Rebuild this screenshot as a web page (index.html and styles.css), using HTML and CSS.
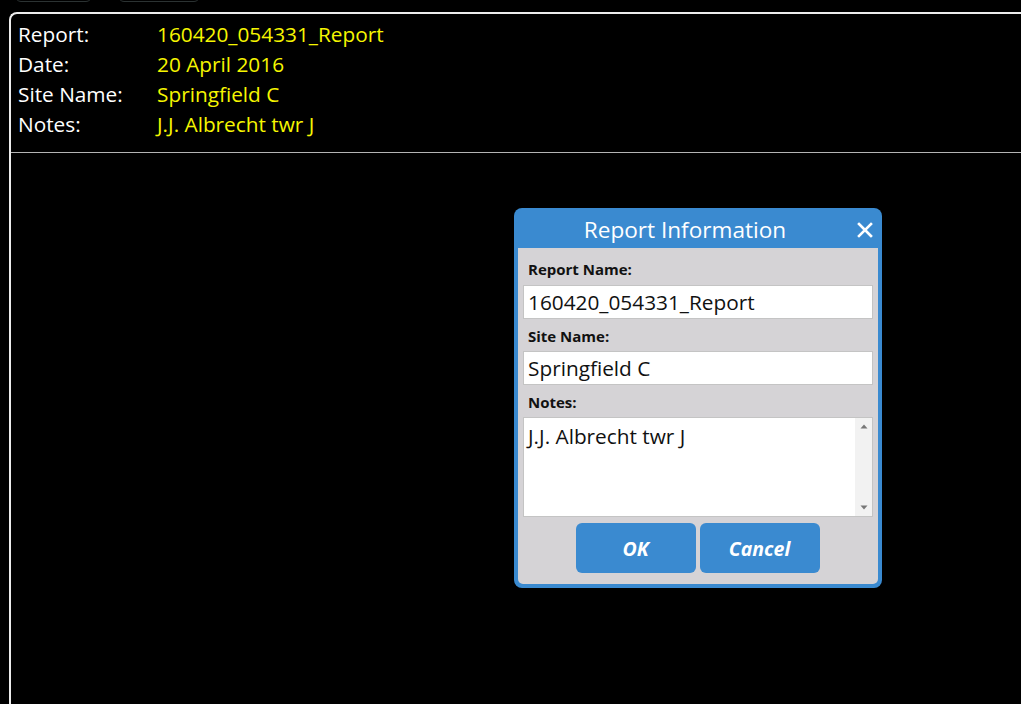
FILE: index.html
```html
<!DOCTYPE html>
<html>
<head>
<meta charset="utf-8">
<link rel="stylesheet" href="styles.css">
</head>
<body>
<div class="tabs">
  <div class="tab tab-a"></div>
  <div class="tab tab-b"></div>
</div>
<div class="panel">
  <div class="info">
    <div class="lbl">Report:</div><div class="val">160420_054331_Report</div>
    <div class="lbl">Date:</div><div class="val">20 April 2016</div>
    <div class="lbl">Site Name:</div><div class="val">Springfield C</div>
    <div class="lbl">Notes:</div><div class="val">J.J. Albrecht twr J</div>
  </div>
  <div class="content"></div>
</div>

<div class="dialog">
  <div class="dlg-title">
    <span>Report Information</span>
    <svg class="close" width="16" height="16" viewBox="0 0 16 16"><path d="M2 2 L14 14 M14 2 L2 14" stroke="#fff" stroke-width="2.6" stroke-linecap="square"/></svg>
  </div>
  <div class="dlg-body">
    <div class="f-lbl first">Report Name:</div>
    <div class="field">160420_054331_Report</div>
    <div class="f-lbl">Site Name:</div>
    <div class="field">Springfield C</div>
    <div class="f-lbl">Notes:</div>
    <div class="area">
      <div class="area-text">J.J. Albrecht twr J</div>
      <div class="scroll">
        <svg width="8" height="5" viewBox="0 0 8 5"><path d="M4 0.5 L7.5 4.5 L0.5 4.5 Z" fill="#777"/></svg>
        <svg width="8" height="5" viewBox="0 0 8 5"><path d="M0.5 0.5 L7.5 0.5 L4 4.5 Z" fill="#777"/></svg>
      </div>
    </div>
    <div class="buttons">
      <div class="btn">OK</div>
      <div class="btn">Cancel</div>
    </div>
  </div>
</div>
</body>
</html>
```

FILE: styles.css
```css
html, body {
  margin: 0;
  padding: 0;
  background: #000;
  overflow: hidden;
  width: 1021px;
  height: 704px;
}
body {
  font-family: "Open Sans", "Noto Sans", sans-serif;
  position: relative;
}
.tabs {
  height: 12px;
  display: flex;
  padding-left: 15px;
  gap: 26px;
  overflow: hidden;
}
.tab {
  height: 20px;
  margin-top: -18px;
  border: 1px solid #2b3232;
  border-radius: 6px;
  box-sizing: border-box;
}
.tab-a { width: 77px; }
.tab-b { width: 82px; }
.panel {
  margin-left: 9px;
  width: 1040px;
  height: 720px;
  border-top: 2px solid #ececec;
  border-left: 2px solid #ececec;
  border-top-left-radius: 8px;
  box-sizing: border-box;
}
.info {
  display: grid;
  grid-template-columns: 139px auto;
  padding: 5px 0 13px 7px;
  border-bottom: 1px solid #b4b4b4;
  font-size: 20.8px;
  line-height: 30px;
}
.lbl { color: #fff; }
.val { color: #f6f600; }

.dialog {
  position: absolute;
  left: 514px;
  top: 208px;
  width: 368px;
  height: 380px;
  background: #3a8ad0;
  border-radius: 8px;
  box-sizing: border-box;
  padding: 0 4px 4px 4px;
  display: flex;
  flex-direction: column;
}
.dlg-title {
  height: 40px;
  display: flex;
  align-items: center;
  justify-content: center;
  position: relative;
  color: #fff;
  font-size: 22.6px;
  padding-top: 2px;
  padding-right: 26px;
  box-sizing: border-box;
}
.close {
  position: absolute;
  right: 5px;
  top: 14px;
}
.dlg-body {
  flex: 1;
  background: #d5d3d6;
  border-radius: 0 0 5px 5px;
  padding: 0 5px;
  display: flex;
  flex-direction: column;
}
.f-lbl {
  height: 32px;
  font-size: 15px;
  font-weight: 700;
  color: #111;
  display: flex;
  align-items: center;
  padding-left: 5px;
  padding-top: 1px;
  box-sizing: border-box;
}
.f-lbl.first { height: 37px; padding-top: 5px; }
.field {
  height: 34px;
  background: #fff;
  border: 1px solid #c4c4c4;
  box-sizing: border-box;
  font-size: 20.8px;
  color: #111;
  display: flex;
  align-items: center;
  padding-left: 4px;
}
.area {
  height: 100px;
  background: #fff;
  border: 1px solid #c4c4c4;
  box-sizing: border-box;
  display: flex;
}
.area-text {
  flex: 1;
  font-size: 20.8px;
  color: #111;
  padding: 4px 0 0 4px;
  line-height: 28px;
}
.scroll {
  width: 17px;
  background: #f2f2f2;
  display: flex;
  flex-direction: column;
  justify-content: space-between;
  align-items: center;
  padding: 6px 0 6px;
}
.buttons {
  display: flex;
  justify-content: center;
  gap: 4px;
  margin-top: 6px;
  padding-right: 1px;
}
.btn {
  width: 120px;
  height: 50px;
  background: #3a8ad0;
  border-radius: 6px;
  color: #fff;
  font-weight: 700;
  font-style: italic;
  font-size: 19.5px;
  display: flex;
  align-items: center;
  justify-content: center;
}
```
